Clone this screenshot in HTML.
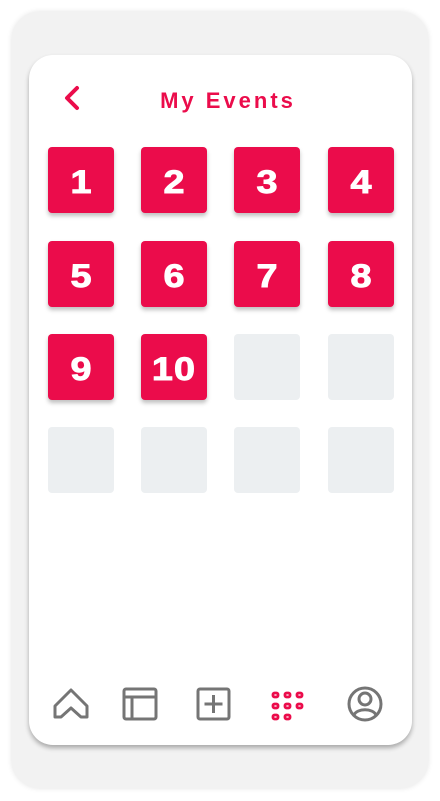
<!DOCTYPE html>
<html><head><style>
body{margin:0;width:440px;height:801px;background:#fff;position:relative;overflow:hidden;font-family:"Liberation Sans",sans-serif}
.outer{position:absolute;left:12px;top:12px;width:416px;height:776px;background:#f2f2f2;border-radius:28px;box-shadow:0 0 6px rgba(0,0,0,.12)}
.card{position:absolute;left:29px;top:55px;width:383px;height:690px;background:#fff;border-radius:24px;box-shadow:0 3px 5px rgba(0,0,0,.3)}
.title{position:absolute;left:0;width:440px;top:88px;text-align:center;color:#eb0c4b;font-weight:bold;font-size:22px;letter-spacing:3px;padding-left:16px;box-sizing:border-box}
.t{position:absolute;width:66px;height:66px;border-radius:4px;background:#eb0c4b;box-shadow:0 3px 4px rgba(0,0,0,.25)}
.t span{display:block;color:#fff;font-weight:bold;font-size:32px;line-height:70px;text-align:center;transform:scaleX(1.18);-webkit-text-stroke:0.9px #fff}
.e{position:absolute;width:66px;height:66px;border-radius:4px;background:#eceff1}
svg{position:absolute}
</style></head><body>
<div class="outer"></div>
<div class="card"></div>
<svg style="left:60px;top:84px" width="24" height="32" viewBox="0 0 24 32"><path d="M17 4 L7 14 L17 24" stroke="#eb0c4b" stroke-width="4" fill="none" stroke-linecap="round" stroke-linejoin="round"/></svg>
<div class="title">My Events</div>

<div class="t" style="left:48px;top:147px"><span>1</span></div>
<div class="t" style="left:141px;top:147px"><span>2</span></div>
<div class="t" style="left:234px;top:147px"><span>3</span></div>
<div class="t" style="left:328px;top:147px"><span>4</span></div>
<div class="t" style="left:48px;top:241px"><span>5</span></div>
<div class="t" style="left:141px;top:241px"><span>6</span></div>
<div class="t" style="left:234px;top:241px"><span>7</span></div>
<div class="t" style="left:328px;top:241px"><span>8</span></div>
<div class="t" style="left:48px;top:334px"><span>9</span></div>
<div class="t" style="left:141px;top:334px"><span style="letter-spacing:1px">10</span></div>
<div class="e" style="left:234px;top:334px"></div>
<div class="e" style="left:328px;top:334px"></div>
<div class="e" style="left:48px;top:427px"></div>
<div class="e" style="left:141px;top:427px"></div>
<div class="e" style="left:234px;top:427px"></div>
<div class="e" style="left:328px;top:427px"></div>

<svg style="left:50px;top:684px" width="42" height="40" viewBox="0 0 42 40"><path d="M5 33 V22 L21 6 L37 22 V33 H31 L21 24 L11 33 Z" fill="none" stroke="#757575" stroke-width="3" stroke-linejoin="round"/></svg>
<svg style="left:120px;top:684px" width="40" height="40" viewBox="0 0 40 40"><rect x="4" y="5" width="32" height="30" rx="2" fill="none" stroke="#757575" stroke-width="3"/><path d="M4 13 H36 M12 13 V35" stroke="#757575" stroke-width="3"/></svg>
<svg style="left:194px;top:684px" width="40" height="40" viewBox="0 0 40 40"><rect x="4" y="5" width="31" height="30" rx="2" fill="none" stroke="#757575" stroke-width="3"/><path d="M19.5 11 V29 M10.5 20 H28.5" stroke="#757575" stroke-width="3"/></svg>
<svg style="left:268px;top:684px" width="40" height="40" viewBox="0 0 40 40" fill="none" stroke="#eb0c4b" stroke-width="2.8">
<rect x="5" y="9" width="5" height="4" rx="1.5"/><rect x="17" y="9" width="5" height="4" rx="1.5"/><rect x="29" y="9" width="5" height="4" rx="1.5"/>
<rect x="5" y="20" width="5" height="4" rx="1.5"/><rect x="17" y="20" width="5" height="4" rx="1.5"/><rect x="29" y="20" width="5" height="4" rx="1.5"/>
<rect x="5" y="31" width="5" height="4" rx="1.5"/><rect x="17" y="31" width="5" height="4" rx="1.5"/></svg>
<svg style="left:344px;top:684px" width="42" height="40" viewBox="0 0 42 40" fill="none" stroke="#757575" stroke-width="3"><circle cx="21" cy="20" r="16"/><circle cx="21" cy="15" r="6"/><path d="M10 31 C13 24 29 24 32 31"/></svg>
</body></html>
